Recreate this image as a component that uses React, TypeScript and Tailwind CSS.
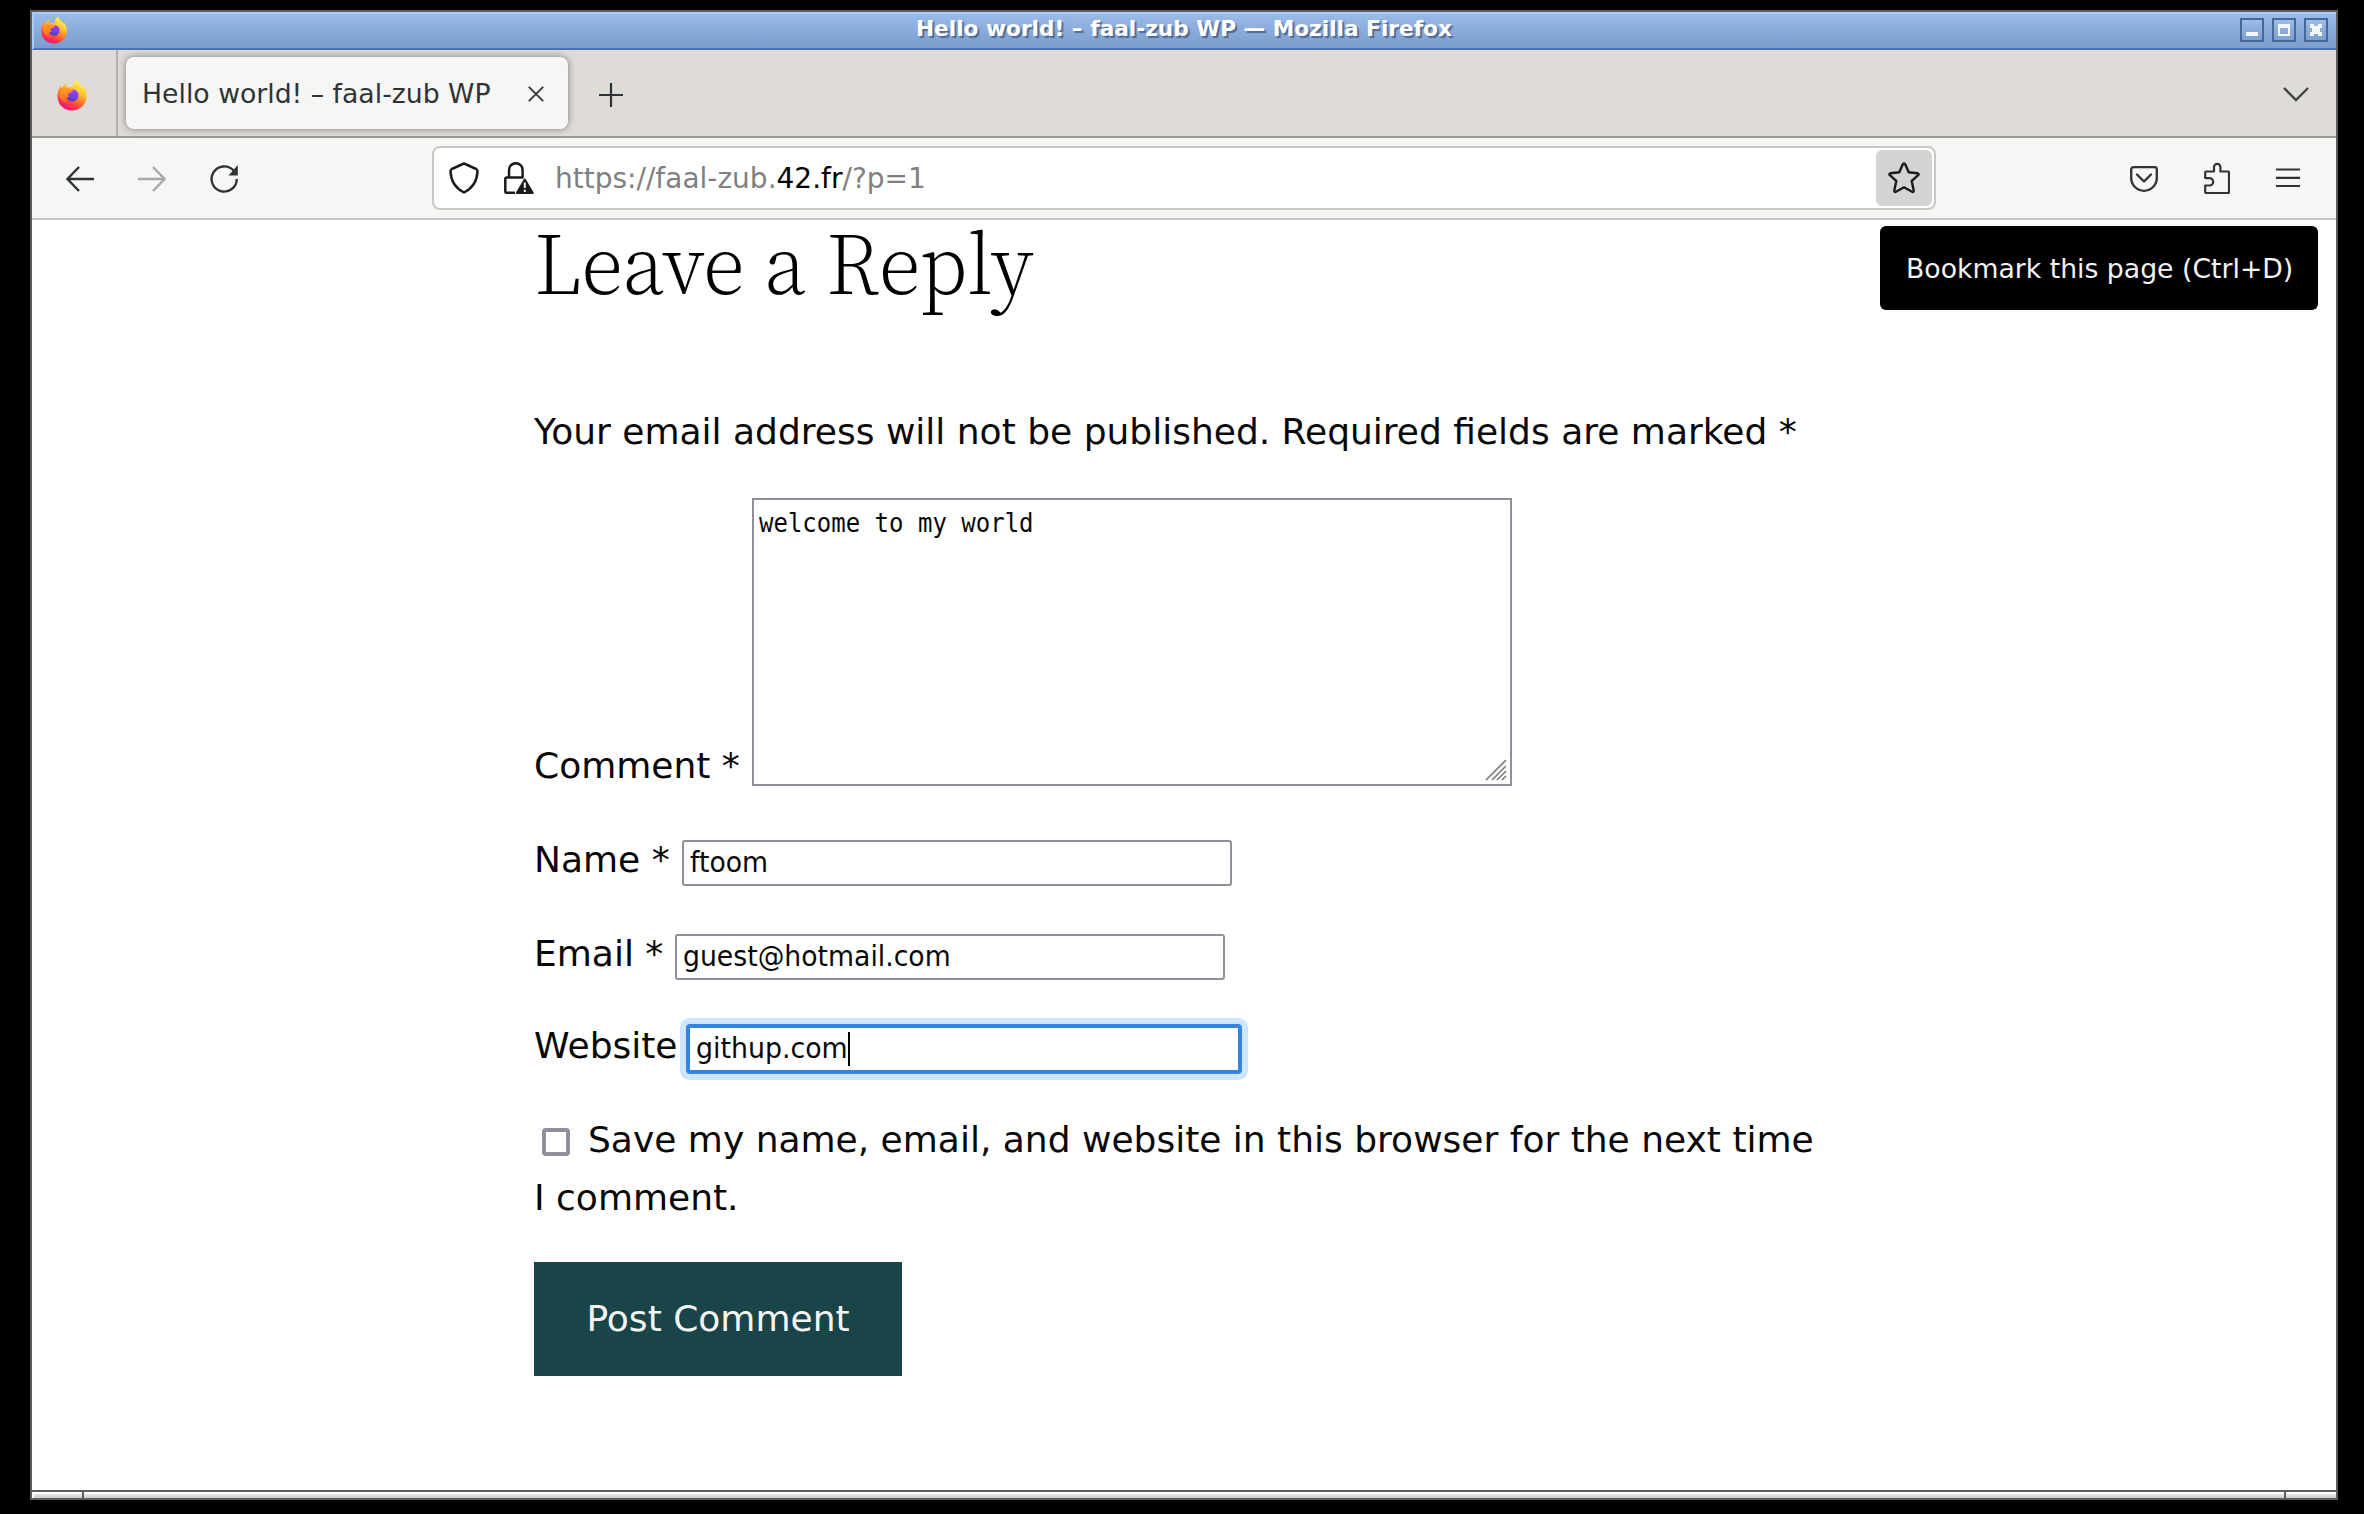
import React from 'react';

function FirefoxLogo({ id, className }: { id: string; className: string }) {
  return (
    <svg viewBox="0 0 32 34" className={className} aria-hidden="true">
      <defs>
        <linearGradient id={`${id}-body`} x1="0.78" y1="0.08" x2="0.35" y2="1">
          <stop offset="0" stopColor="#fff44f" />
          <stop offset="0.3" stopColor="#ffc938" />
          <stop offset="0.58" stopColor="#ff7a2a" />
          <stop offset="0.8" stopColor="#ff3647" />
          <stop offset="1" stopColor="#e31587" />
        </linearGradient>
        <linearGradient id={`${id}-globe`} x1="0.6" y1="0" x2="0.4" y2="1">
          <stop offset="0" stopColor="#a63df0" />
          <stop offset="0.6" stopColor="#7044e0" />
          <stop offset="1" stopColor="#4b3aa8" />
        </linearGradient>
        <linearGradient id={`${id}-fox`} x1="0.2" y1="0" x2="0.3" y2="1">
          <stop offset="0" stopColor="#ffa02a" />
          <stop offset="0.5" stopColor="#ff8420" />
          <stop offset="1" stopColor="#ff5a36" />
        </linearGradient>
      </defs>
      <path
        fill={`url(#${id}-body)`}
        d="M16 33.5C7.3 33.5.6 27 .6 18.6.6 13.5 2 9.400 4.300 7c0 1.300.3 2 .8 2.600C6 7.600 7.500 6 9.400 5c0 1.600 1 3.300 3.200 3.500L17 8.600c0-3.800 1.600-6.600 4-8.400.6 3.800 4.800 5.600 6.800 9.200.1-.8 0-1.400-.2-2.200C30.400 10.400 31.600 14 31.600 18.400 31.600 27 24.700 33.500 16 33.500Z"
      />
      <circle cx="16.300" cy="17.500" r="6.600" fill={`url(#${id}-globe)`} />
      <path
        fill={`url(#${id}-fox)`}
        d="M2.400 15c1.200-3.600 4.200-6 8-5.800 2 .1 2.800 1.700 5 1.800 1.600.1 2 .8 1.500 1.700-.9 1.500-3.600 1.600-4.600 2.700-1 1.100-.4 2.600.5 3.600-1.800.2-3.100 1-3.400 2.600-.4 2 1.500 4 4 4.600C6.600 26 2 21 2.400 15Z"
      />
    </svg>
  );
}

function WindowButton({ children }: { children: React.ReactNode }) {
  return (
    <div className="flex h-6 w-6 items-center justify-center border-2 border-[#456a98] bg-linear-to-b from-[#9dbbe8] to-[#7c9fd0]">
      <svg viewBox="0 0 20 20" className="h-5 w-5" shapeRendering="crispEdges" fill="#f4f6fa">
        {children}
      </svg>
    </div>
  );
}

function TitleBar() {
  return (
    <div className="flex h-[38px] items-start border-t-2 border-b-2 border-l-2 border-t-[#a8cdfb] border-b-[#4a74ab] border-l-[#a8cdfb] bg-linear-to-b from-[#9abae7] to-[#7a9dcd]">
      <FirefoxLogo id="fx-title" className="mt-[2px] ml-[5px] h-[28px] w-[30px]" />
      <div className="ml-[847px] grow text-[21.65px] leading-[29px] font-bold whitespace-nowrap text-white [text-shadow:2px_2px_1px_rgba(50,70,110,0.65)]">
        Hello world! – faal-zub WP — Mozilla Firefox
      </div>
      <div className="mt-1 mr-2 flex gap-2">
        <WindowButton>
          <path d="M4 12h12v4H4z" />
        </WindowButton>
        <WindowButton>
          <path fillRule="evenodd" d="M4 4h12v12H4zM6 8v6h8V8z" />
        </WindowButton>
        <WindowButton>
          <path d="M4 4h4v2h4V4h4v4h-2v4h2v4h-4v-2H8v2H4v-4h2V8H4z" />
        </WindowButton>
      </div>
    </div>
  );
}

function TabStrip() {
  return (
    <div className="flex h-[88px] items-center border-b-2 border-[#9b9690] bg-[#dfdcd8] text-[#2e3436]">
      <div className="flex h-full w-[86px] items-center justify-center border-r-2 border-[#b3b1ae] pr-[4px]">
        <FirefoxLogo id="fx-view" className="mt-[3px] h-[32px] w-[32px]" />
      </div>
      <div className="ml-2 flex h-[72px] w-[442px] items-center rounded-lg bg-[#f6f6f5] pr-6 pl-4 shadow-[0_0_6px_1px_rgba(0,0,0,0.35)]">
        <span className="mt-[2px] grow text-[26.7px] whitespace-nowrap">Hello world! – faal-zub WP</span>
        <svg viewBox="0 0 16 16" className="mt-[1px] h-4 w-4" fill="none" stroke="#2e3436" strokeWidth="1.800">
          <path d="M.8.8 15.200 15.200M15.200.8.8 15.200" />
        </svg>
      </div>
      <svg viewBox="0 0 24 24" className="mt-[3px] ml-[31px] h-6 w-6" fill="none" stroke="#2e3436" strokeWidth="2.200">
        <path d="M12 0v24M0 12h24" />
      </svg>
      <svg viewBox="0 0 26 16" className="mt-[1px] mr-[27px] ml-auto h-4 w-[26px]" fill="none" stroke="#3f4547" strokeWidth="2.400">
        <path d="M1 2l12 12L25 2" />
      </svg>
    </div>
  );
}

function UrlBar() {
  return (
    <div className="ml-[194px] flex h-16 w-[1504px] items-center rounded-lg border-2 border-[#cbc7c2] bg-white">
      <svg viewBox="0 0 30 32" className="ml-[15px] h-8 w-[30px]" fill="none" stroke="#1b1b1b" strokeWidth="2.500" strokeLinejoin="round">
        <path d="M15 1.500 27.200 7c1 .5 1.400 1.200 1.300 2.300C28.200 18 24 26 15 30.500 6 26 1.800 18 1.500 9.300 1.400 8.200 1.800 7.500 2.800 7Z" />
      </svg>
      <svg viewBox="0 0 30 32" className="ml-[25px] h-8 w-[30px]" fill="none" stroke="#1b1b1b" strokeWidth="2.500">
        <path d="M5 15V8a6.800 6.800 0 0 1 13.600 0v7" />
        <path d="M11 30.800H2.600a1.300 1.300 0 0 1-1.300-1.300V16.800a1.300 1.300 0 0 1 1.300-1.300h17" />
        <path d="M20.800 17.500 28.800 31H12.800Z" fill="#1b1b1b" strokeWidth="2" strokeLinejoin="round" />
        <path d="M20.800 20.500v5.500M20.800 27.800v2.200" stroke="#fff" strokeWidth="2" />
      </svg>
      <div className="mt-[1px] ml-[21px] grow text-[28px] whitespace-nowrap text-[#808080]">
        https://faal-zub.<span className="text-black">42.fr</span>/?p=1
      </div>
      <div className="mr-[2px] flex h-14 w-14 items-center justify-center rounded-md bg-[#d4d4d4]">
        <svg viewBox="0 0 32 32" className="h-8 w-8" fill="none" stroke="#1b1b1b" strokeWidth="2.400" strokeLinejoin="round">
          <path d="M14.800 2.200a1.300 1.300 0 0 1 2.400 0l3.500 8 8.800 1a1.100 1.100 0 0 1 .6 2L23.700 19l2 9.500a1.100 1.100 0 0 1-1.700 1.200L16 25.200 8 29.700a1.100 1.100 0 0 1-1.700-1.200l2-9.500-6.400-5.800a1.100 1.100 0 0 1 .6-2l8.800-1Z" />
        </svg>
      </div>
    </div>
  );
}

function Toolbar() {
  return (
    <div className="flex h-[82px] items-center border-b-2 border-[#cbc7c2] bg-[#f6f6f5]">
      <svg viewBox="0 0 28 26" className="mt-[2px] ml-[34px] h-[26px] w-7" fill="none" stroke="#2e3436" strokeWidth="2.400">
        <path d="M28 13H1.500M13 1 1.500 13 13 25" />
      </svg>
      <svg viewBox="0 0 28 26" className="mt-[2px] ml-11 h-[26px] w-7" fill="none" stroke="#a7a9a9" strokeWidth="2.400">
        <path d="M0 13h26.500M15 1l11.500 12L15 25" />
      </svg>
      <svg viewBox="0 0 28 28" className="mt-[2px] ml-11 h-7 w-7" fill="none" stroke="#2e3436" strokeWidth="2.400">
        <path d="M23.500 5.500A12.600 12.600 0 1 0 26.800 14" />
        <path d="M27.800 0v10.500H18.500Z" fill="#2e3436" stroke="none" />
      </svg>
      <UrlBar />
      <svg viewBox="0 0 28 26" className="mt-[1px] ml-[194px] h-[26px] w-7" fill="none" stroke="#2e3436" strokeWidth="2.300" strokeLinejoin="round">
        <path d="M3.500 1.200h21a2.300 2.300 0 0 1 2.300 2.300V12a12.800 12.800 0 0 1-25.600 0V3.500A2.300 2.300 0 0 1 3.500 1.200Z" />
        <path d="M7 8.500l7 7 7-7" strokeLinecap="round" />
      </svg>
      <svg viewBox="0 0 26 32" className="ml-[46px] h-8 w-[26px]" fill="none" stroke="#2e3436" strokeWidth="2.200" strokeLinejoin="round">
        <path d="M2.500 9.500H10V5a3.200 3.200 0 0 1 6.400 0v4.500H24a1 1 0 0 1 1 1V30a1 1 0 0 1-1 1H2.200a1 1 0 0 1-1-1v-6.500H5.500a3.700 3.700 0 0 0 0-7.400H1.200v-5.600a1 1 0 0 1 1-1Z" />
      </svg>
      <svg viewBox="0 0 24 20" className="ml-[46px] h-5 w-6" fill="none" stroke="#2e3436" strokeWidth="2.200">
        <path d="M0 1.500h24M0 9.800h24M0 18h24" />
      </svg>
    </div>
  );
}

function ResizeGrip() {
  return (
    <svg viewBox="0 0 22 22" className="h-[22px] w-[22px]" fill="none" stroke="#7c7c7c" strokeWidth="1.700">
      <path d="M1 21 21 1M7 21 21 7M12 21l9-9M17 21l4-4" />
    </svg>
  );
}

function TextField({ value }: { value: string }) {
  return (
    <div className="mt-[9px] flex h-[46px] w-[550px] items-center rounded-[3px] border-2 border-[#8f8f9d] bg-white pl-[6px] text-[26.7px] leading-none whitespace-nowrap">
      <span className="origin-[0_85%] scale-y-[1.06]">{value}</span>
    </div>
  );
}

function CommentForm() {
  return (
    <div className="h-[1270px] bg-white pl-[502px] text-[36px] leading-[58px] text-[#080808]">
      <h3 className='h-[78px] origin-left scale-x-[0.948] font-["Noto_Serif_CJK_SC","Liberation_Serif",serif] text-[81px] leading-[78px] font-extralight whitespace-nowrap text-black'>
        Leave a Reply
      </h3>
      <p className="mt-[105px] whitespace-nowrap">
        Your email address will not be published. Required fields are marked *
      </p>
      <div className="mt-[37px] flex items-end">
        <span className="w-[218px] shrink-0">Comment *</span>
        <div className="mb-[9px] flex h-[288px] w-[760px] flex-col justify-between border-2 border-[#8f8f9d] bg-white pt-[10px] pr-[3px] pb-[3px] pl-[5px]">
          <span className='block origin-[0_22px] scale-y-[1.08] font-["DejaVu_Sans_Mono",monospace] text-2xl leading-7'>
            welcome to my world
          </span>
          <div className="flex justify-end">
            <ResizeGrip />
          </div>
        </div>
      </div>
      <div className="mt-9 flex h-[58px] items-start">
        <span className="w-[148px] shrink-0">Name *</span>
        <TextField value="ftoom" />
      </div>
      <div className="mt-9 flex h-[58px] items-start">
        <span className="w-[141px] shrink-0">Email *</span>
        <TextField value="guest@hotmail.com" />
      </div>
      <div className="mt-[34px] flex h-[58px] items-start">
        <span className="w-[152px] shrink-0">Website</span>
        <div className="mt-[7px] flex h-[50px] w-[556px] items-center rounded-[4px] border-4 border-[#3584e4] bg-white pl-[6px] text-[26.8px] leading-none shadow-[0_0_0_6px_#cde5fd]">
          <span className="origin-[0_85%] scale-y-[1.06]">githup.com</span>
          <span className="h-[34px] w-[2px] bg-black" />
        </div>
      </div>
      <p className="mt-9 whitespace-nowrap">
        <span className="mr-[18px] ml-2 inline-block h-7 w-7 rounded-[4px] border-4 border-[#8f8f9d] bg-white align-[-4px]" />
        Save my name, email, and website in this browser for the next time
        <br />I comment.
      </p>
      <div className="mt-[35px] flex h-[114px] w-[368px] items-center justify-center bg-[#1a4548] text-[#f3f5f5]">
        Post Comment
      </div>
    </div>
  );
}

function WindowFrameBottom() {
  return (
    <div className="flex h-2 border-t-2 border-[#5c5b60] bg-linear-to-b from-white from-33% via-[#e8e8ea] via-34% to-[#cacacd]">
      <div className="w-[52px] border-r-2 border-l-2 border-r-[#5c5b60] border-l-white" />
      <div className="grow" />
      <div className="w-[52px] border-l-2 border-[#5c5b60]" />
    </div>
  );
}

export default function App() {
  return (
    <div className={'h-[1514px] w-[2364px] overflow-hidden bg-black pt-[10px] pl-[30px] font-["DejaVu_Sans",sans-serif]'}>
      <div className="relative w-[2308px] border-2 border-[#5c5b60] bg-white">
        <TitleBar />
        <TabStrip />
        <Toolbar />
        <CommentForm />
        <WindowFrameBottom />
        <div className="absolute top-[214px] left-[1848px] flex h-[84px] w-[438px] items-center rounded-md bg-black pt-[2px] pl-[26px] text-[26.7px] whitespace-nowrap text-[#f4f4f4]">
          Bookmark this page (Ctrl+D)
        </div>
      </div>
    </div>
  );
}
